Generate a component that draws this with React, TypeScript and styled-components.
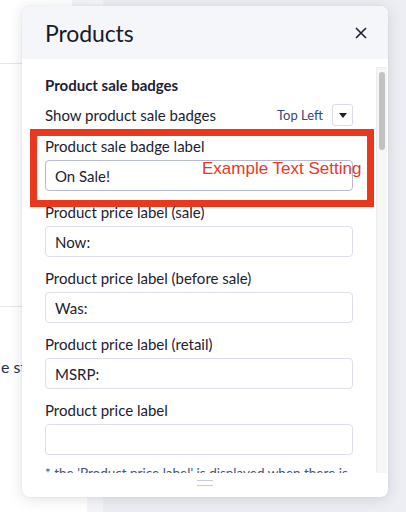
import React from 'react'
import styled, { createGlobalStyle } from 'styled-components'

const Global = createGlobalStyle`
  html, body {
    margin: 0;
    padding: 0;
  }
  body {
    font-family: Lato, 'Noto Sans', sans-serif;
    background: #eceef3;
  }
`

const Page = styled.div`
  position: relative;
  width: 406px;
  height: 512px;
  overflow: hidden;
  display: flex;
`

const Sidebar = styled.div`
  width: 87px;
  background: #fff;
  display: flex;
  flex-direction: column;
`

const SideTop = styled.div`
  height: 63px;
  display: flex;
  border-bottom: 1px solid #e4e5ea;
`

const SideTopCard = styled.div`
  width: 72px;
  background: #fff;
`

const SideTopGap = styled.div`
  flex: 1;
  background: #f2f3f6;
`

const SideSection = styled.div`
  height: 242px;
  border-bottom: 1px solid #e4e5ea;
`

const SideText = styled.div`
  padding-top: 50px;
  padding-left: 1px;
  font-size: 16px;
  color: #2b2f3f;
  white-space: nowrap;
`

const Gutter = styled.div`
  width: 16px;
  background: #f4f5f8;
`

const Main = styled.div`
  flex: 1;
  background: #eceef3;
`

const Modal = styled.div`
  position: absolute;
  left: 22px;
  top: 6px;
  width: 366px;
  height: 491px;
  background: #fff;
  border-radius: 7px;
  box-shadow: 0 2px 14px rgba(40, 45, 70, 0.14), 0 0 1px rgba(40, 45, 70, 0.2);
  display: flex;
  flex-direction: column;
  overflow: hidden;
`

const Header = styled.div`
  height: 53px;
  background: #f5f6fa;
  display: flex;
  align-items: center;
  justify-content: space-between;
  padding: 0 20px 0 23px;
  flex-shrink: 0;
`

const Title = styled.h2`
  margin: 0;
  font-size: 23px;
  font-weight: 400;
  color: #161a2b;
  letter-spacing: -0.1px;
`

const Close = styled.button`
  border: none;
  background: none;
  padding: 0;
  width: 14px;
  height: 14px;
  display: flex;
  cursor: pointer;
`

const Body = styled.div`
  flex: 1;
  display: flex;
  padding-top: 8px;
  min-height: 0;
`

const Content = styled.div`
  flex: 1;
  overflow: hidden;
  padding: 8px 23px 0 23px;
`

const Track = styled.div`
  width: 11px;
  margin-right: 1px;
  background: #f6f6f7;
  border-left: 1px solid #ececef;
  border-top: 1px solid #ececef;
  box-sizing: border-box;
  padding: 4px 2px 0 2px;
`

const Thumb = styled.div`
  width: 6px;
  height: 78px;
  border-radius: 3px;
  background: #c2c2c4;
`

const Footer = styled.div`
  height: 24px;
  flex-shrink: 0;
  display: flex;
  justify-content: center;
  padding-top: 7px;
  box-sizing: border-box;
`

const Handle = styled.div`
  width: 16px;
  height: 6px;
  border-top: 1.5px solid #c8cbd9;
  border-bottom: 1.5px solid #c8cbd9;
  box-sizing: border-box;
`

const SectionTitle = styled.div`
  font-size: 15px;
  font-weight: 700;
  line-height: 20px;
  color: #1d2132;
`

const Row = styled.div`
  margin-top: 9px;
  height: 22px;
  display: flex;
  align-items: center;
`

const RowLabel = styled.div`
  flex: 1;
  font-size: 15px;
  color: #1d2132;
`

const RowValue = styled.span`
  font-size: 13px;
  color: #3a4676;
  margin-right: 9px;
`

const DropButton = styled.div`
  width: 21px;
  height: 22px;
  border: 1px solid #d9dce6;
  border-radius: 3px;
  box-sizing: border-box;
  display: flex;
  align-items: center;
  justify-content: center;
`

const Caret = styled.div`
  width: 0;
  height: 0;
  border-left: 4px solid transparent;
  border-right: 4px solid transparent;
  border-top: 5px solid #1d2132;
`

const Field = styled.div<{ $first?: boolean }>`
  position: relative;
  margin-top: ${(p) => (p.$first ? '10px' : '11px')};
`

const Highlight = styled.div`
  position: absolute;
  left: -15px;
  right: -21px;
  top: -7px;
  bottom: -16px;
  border: 7px solid #e8391f;
  pointer-events: none;
`

const Annotation = styled.div`
  position: absolute;
  left: 157px;
  top: 23px;
  font-family: 'Liberation Sans', Arial, sans-serif;
  font-size: 17px;
  color: #e8391f;
  white-space: nowrap;
`

const Label = styled.label`
  display: block;
  font-size: 15px;
  line-height: 20px;
  color: #1d2132;
  margin-bottom: 4px;
`

const Input = styled.div<{ $focused?: boolean }>`
  height: 31px;
  box-sizing: border-box;
  border: 1px solid ${(p) => (p.$focused ? '#b6bbd1' : '#dcdfe9')};
  border-radius: 4px;
  display: flex;
  align-items: center;
  padding: 0 9px;
  font-size: 15px;
  color: #1d2132;
`

const Note = styled.div`
  margin-top: 10px;
  font-size: 13.5px;
  color: #4a5275;
  white-space: nowrap;
`

const fields = [
  { label: 'Product price label (sale)', value: 'Now:' },
  { label: 'Product price label (before sale)', value: 'Was:' },
  { label: 'Product price label (retail)', value: 'MSRP:' },
  { label: 'Product price label', value: '' },
]

export default function App() {
  return (
    <>
      <Global />
      <Page>
        <Sidebar>
          <SideTop>
            <SideTopCard />
            <SideTopGap />
          </SideTop>
          <SideSection />
          <SideText>e sty</SideText>
        </Sidebar>
        <Gutter />
        <Main />

        <Modal>
          <Header>
            <Title>Products</Title>
            <Close aria-label="Close">
              <svg width="14" height="14" viewBox="0 0 14 14">
                <path d="M2 2 L12 12 M12 2 L2 12" stroke="#1d2132" strokeWidth="1.6" />
              </svg>
            </Close>
          </Header>
          <Body>
            <Content>
              <SectionTitle>Product sale badges</SectionTitle>
              <Row>
                <RowLabel>Show product sale badges</RowLabel>
                <RowValue>Top Left</RowValue>
                <DropButton>
                  <Caret />
                </DropButton>
              </Row>
              <Field $first>
                <Label>Product sale badge label</Label>
                <Input $focused>On Sale!</Input>
                <Highlight />
                <Annotation>Example Text Setting</Annotation>
              </Field>
              {fields.map((f) => (
                <Field key={f.label}>
                  <Label>{f.label}</Label>
                  <Input>{f.value}</Input>
                </Field>
              ))}
              <Note>* the 'Product price label' is displayed when there is</Note>
            </Content>
            <Track>
              <Thumb />
            </Track>
          </Body>
          <Footer>
            <Handle />
          </Footer>
        </Modal>
      </Page>
    </>
  )
}
